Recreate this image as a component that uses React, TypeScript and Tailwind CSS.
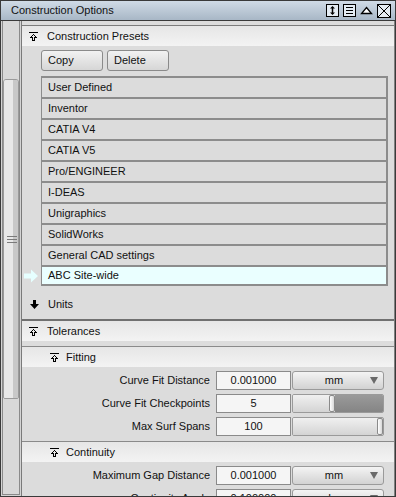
import React from 'react';

const font = { fontFamily: '"Liberation Sans", Arial, sans-serif' };

// pixel map of the collapse arrow: bar on top, outlined up arrow below
const arrowPixels: [number, number][] = [
  [4, 2], [3, 3], [5, 3], [2, 4], [6, 4],
  [1, 5], [2, 5], [3, 5], [5, 5], [6, 5], [7, 5],
  [3, 6], [5, 6], [3, 7], [5, 7], [3, 8], [4, 8], [5, 8],
];

function CollapseIcon() {
  return (
    <svg width="9" height="9" viewBox="0 0 9 9" className="shrink-0" shapeRendering="crispEdges">
      <rect x="0" y="0" width="9" height="1" fill="#000" />
      {arrowPixels.map(([x, y]) => (
        <rect key={`${x}-${y}`} x={x} y={y} width="1" height="1" fill="#000" />
      ))}
    </svg>
  );
}

function DownArrow() {
  return (
    <svg width="9" height="9" viewBox="0 0 9 9" className="shrink-0">
      <polygon points="3,0 6,0 6,4 9,4 4.5,9 0,4 3,4" fill="#000" />
    </svg>
  );
}

function Header({ label, indent = false }: { label: string; indent?: boolean }) {
  return (
    <div className="h-[20px] flex items-center bg-gradient-to-b from-[#e6e6e6] to-[#f3f3f3]">
      <div className={`flex items-center ${indent ? 'pl-[28px] gap-[7px]' : 'pl-[7px] gap-[9px]'}`}>
        <CollapseIcon />
        <span>{label}</span>
      </div>
    </div>
  );
}

function Dropdown({ unit }: { unit: string }) {
  return (
    <div className="ml-[1px] w-[92px] h-[19px] rounded-[3px] border border-[#9a9a9a] bg-gradient-to-b from-[#f4f4f4] to-[#d2d2d2] relative flex items-center justify-center">
      <span className="pr-[8px]">{unit}</span>
      <svg width="8" height="7" viewBox="0 0 8 7" className="absolute right-[5px] top-[5px]">
        <polygon points="0,0 8,0 4,7" fill="#6a6a6a" />
      </svg>
    </div>
  );
}

function Slider({ pos }: { pos: number }) {
  return (
    <div className="ml-[1px] w-[92px] h-[19px] border border-[#9a9a9a] rounded-[2px] flex overflow-hidden">
      <div className="bg-gradient-to-b from-[#f0f0f0] to-[#d4d4d4]" style={{ width: pos }} />
      <div className="w-[6px] h-full rounded-[2px] border border-[#8a8a8a] bg-gradient-to-r from-[#ffffff] to-[#d8d8d8]" />
      <div className="flex-1 bg-gradient-to-b from-[#9a9a9a] to-[#858585]" />
    </div>
  );
}

function ValueRow({ label, value, unit, slider }: { label: string; value: string; unit?: string; slider?: number }) {
  return (
    <div className="flex items-center h-[19px]">
      <div className="w-[188px] text-right">{label}</div>
      <div className="ml-[6px] w-[75px] h-[19px] border border-[#8a8a8a] bg-[#f5f5f5] flex items-center justify-center">{value}</div>
      {slider !== undefined ? <Slider pos={slider} /> : <Dropdown unit={unit ?? ''} />}
    </div>
  );
}

const presets = [
  'User Defined',
  'Inventor',
  'CATIA V4',
  'CATIA V5',
  'Pro/ENGINEER',
  'I-DEAS',
  'Unigraphics',
  'SolidWorks',
  'General CAD settings',
];

export default function App() {
  return (
    <div style={font} className="w-[396px] h-[497px] border border-[#3a3a3a] bg-[#dcdcdc] text-[11px] text-[#111] flex flex-col overflow-hidden">
      {/* title bar */}
      <div className="h-[20px] shrink-0 border-b border-[#3a3a3a] bg-gradient-to-b from-[#d0dbe6] to-[#a8b7c6] flex items-center pl-[10px] pr-[4px]">
        <span className="flex-1">Construction Options</span>
        <div className="flex items-center gap-[4px]">
          <svg width="13" height="13" viewBox="0 0 13 13">
            <rect x="0.5" y="0.5" width="12" height="12" fill="#e4ecf3" stroke="#000" />
            <line x1="6.5" y1="3" x2="6.5" y2="10" stroke="#000" strokeWidth="1.5" />
            <polygon points="4,4.5 9,4.5 6.5,2" fill="#000" />
            <polygon points="4,8.5 9,8.5 6.5,11" fill="#000" />
          </svg>
          <svg width="13" height="13" viewBox="0 0 13 13">
            <rect x="0.5" y="0.5" width="12" height="12" fill="#e4ecf3" stroke="#000" />
            <line x1="3" y1="3.5" x2="10" y2="3.5" stroke="#000" />
            <line x1="3" y1="6.5" x2="10" y2="6.5" stroke="#000" />
            <line x1="3" y1="9.5" x2="10" y2="9.5" stroke="#000" />
          </svg>
          <svg width="13" height="13" viewBox="0 0 13 13">
            <polygon points="6.5,3.5 11.5,9.5 1.5,9.5" fill="#fff" stroke="#000" strokeWidth="1.3" />
          </svg>
          <svg width="14" height="14" viewBox="0 0 14 14">
            <rect x="0.5" y="0.5" width="13" height="13" fill="#e4ecf3" stroke="#000" />
            <line x1="1" y1="1" x2="13" y2="13" stroke="#000" />
            <line x1="13" y1="1" x2="1" y2="13" stroke="#000" />
          </svg>
        </div>
      </div>

      <div className="flex flex-1 min-h-0">
        {/* left scroll strip */}
        <div className="w-[21px] shrink-0 border-r border-[#7a7a7a] bg-[#d4d4d4] px-[1px] pb-[1px] flex flex-col">
          <div className="flex-1 border-x border-b border-[#8a8a8a] bg-[#d8d8d8] pt-[58px]">
            <div className="h-[320px] rounded-t-[3px] rounded-b-[2px] border border-[#9a9a9a] flex overflow-hidden relative">
              <div className="w-[9px] bg-[#e8e8e8]" />
              <div className="flex-1 bg-[#c8c8c8]" />
              <div className="absolute left-[3px] top-[156px] w-[10px] flex flex-col gap-[2px]">
                <div className="h-px bg-[#7a7a7a]" />
                <div className="h-px bg-[#7a7a7a]" />
                <div className="h-px bg-[#7a7a7a]" />
              </div>
            </div>
          </div>
        </div>

        {/* main */}
        <div className="flex-1 border-r border-[#808080] overflow-hidden">
          <div className="h-[4px]" />
          <div className="border-t border-[#7c7c7c]" />
          <Header label="Construction Presets" />

          <div className="flex gap-[4px] pl-[19px] mt-[4px]">
            <div className="w-[62px] h-[21px] rounded-[3px] border border-[#8a8a8a] bg-gradient-to-b from-[#f2f2f2] to-[#d6d6d6] flex items-center pl-[6px]">Copy</div>
            <div className="w-[62px] h-[21px] rounded-[3px] border border-[#8a8a8a] bg-gradient-to-b from-[#f2f2f2] to-[#d6d6d6] flex items-center pl-[6px]">Delete</div>
          </div>

          <div className="flex mt-[5px]">
            <div className="w-[19px] shrink-0 flex flex-col justify-end pb-[3px] pl-[2px]">
              <svg width="15" height="14" viewBox="0 0 15 14">
                <polygon points="0,4.5 7,4.5 7,0.5 14,7 7,13.5 7,9.5 0,9.5" fill="#e6ffff" />
              </svg>
            </div>
            <div className="w-[347px] border-l border-r-2 border-b-2 border-[#8c8c8c]">
              {presets.map((p) => (
                <div key={p} className="h-[21px] border-t-2 border-[#8c8c8c] flex items-center pl-[6px]">{p}</div>
              ))}
              <div className="h-[19px] border-t-2 border-[#8c8c8c] bg-[#eaffff] flex items-center pl-[6px]">ABC Site-wide</div>
            </div>
          </div>

          <div className="h-[20px] mt-[8px] flex items-center gap-[9px] pl-[8px]">
            <DownArrow />
            <span>Units</span>
          </div>

          <div className="mt-[5px] border-t-2 border-[#707070]" />
          <Header label="Tolerances" />
          <div className="h-[5px]" />
          <div className="border-t border-[#8a8a8a]" />
          <Header label="Fitting" indent />
          <div className="flex flex-col gap-[4px] pt-[4px] pb-[5px]">
            <ValueRow label="Curve Fit Distance" value="0.001000" unit="mm" />
            <ValueRow label="Curve Fit Checkpoints" value="5" slider={36} />
            <ValueRow label="Max Surf Spans" value="100" slider={84} />
          </div>
          <div className="border-t border-[#8a8a8a]" />
          <Header label="Continuity" indent />
          <div className="flex flex-col gap-[4px] pt-[4px]">
            <ValueRow label="Maximum Gap Distance" value="0.001000" unit="mm" />
            <ValueRow label="Continuity Angle" value="0.100000" unit="deg" />
          </div>
        </div>
      </div>
    </div>
  );
}
